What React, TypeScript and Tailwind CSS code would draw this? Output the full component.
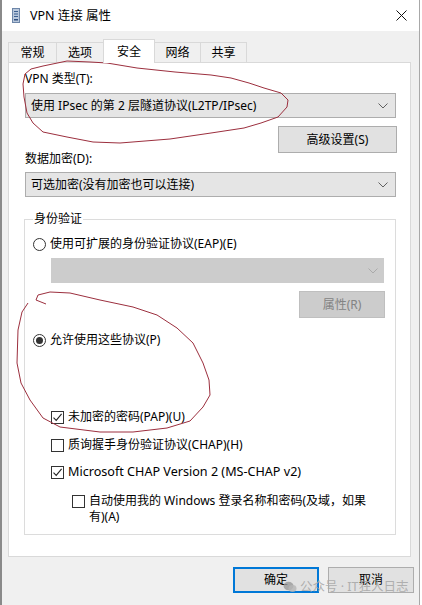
import React from "react";

const Chevron = ({ color = "#606060" }: { color?: string }) => (
  <svg width="10" height="6" viewBox="0 0 10 6">
    <path d="M0.5 0.5 L5 5 L9.5 0.5" fill="none" stroke={color} strokeWidth="1" />
  </svg>
);

const Check = ({ checked }: { checked?: boolean }) => (
  <span className="w-[13px] h-[13px] border border-[#333333] bg-white flex items-center justify-center shrink-0">
    {checked && (
      <svg width="11" height="11" viewBox="0 0 11 11">
        <path d="M1.5 5.6 L4.2 8.4 L9.6 1.9" fill="none" stroke="#222222" strokeWidth="1.1" />
      </svg>
    )}
  </span>
);

const Radio = ({ checked }: { checked?: boolean }) => (
  <span className="w-[13px] h-[13px] rounded-full border border-[#333333] bg-white flex items-center justify-center shrink-0">
    {checked && <span className="w-[7px] h-[7px] rounded-full bg-[#333333]" />}
  </span>
);

export default function App() {
  const p1 =
    "M24 97 L23 84 L25 74 L31 69 L43 66 L67 61 L90 62 L107 63 L137 68 L175 72 L211 75 L231 78 L249 83 L264 88 L281 93 L288 100 L287 107 L278 117 L261 123 L244 128 L211 133 L170 139 L120 143 L93 142 L67 137 L43 132 L33 123 L27 113 L24 97";
  const p2 =
    "M46 304 L36 300 L38 295 L50 292 L70 293 L100 300 L133 307 L157 315 L177 328 L193 343 L203 363 L209 380 L210 395 L203 407 L190 421 L167 428 L133 432 L100 432 L60 427 L43 418 L30 400 L21 383 L17 363 L18 330 L22 312 L28 303";
  return (
    <div className="relative w-[422px] h-[605px] bg-white overflow-hidden font-['Noto_Sans','Noto_Sans_CJK_SC',sans-serif] text-[12px] text-black">
      <div className="w-[420px] h-[605px] border-l-2 border-r border-l-[#8a8a8a] border-r-[#a8a8a8] bg-[#f0f0f0] flex flex-col">
        {/* title bar */}
        <div className="h-[31px] bg-white flex items-center shrink-0">
          <div className="ml-[10px] w-[8px] h-[15px] flex items-center justify-center">
            <svg width="8" height="15" viewBox="0 0 8 15">
              <rect x="0.5" y="0.5" width="7" height="14" fill="#b9c8dc" stroke="#6d86a8" />
              <rect x="2" y="3" width="4" height="1" fill="#3b5f8f" />
              <rect x="2" y="5.5" width="4" height="1" fill="#3b5f8f" />
              <rect x="2" y="8" width="4" height="1" fill="#3b5f8f" />
              <rect x="2" y="11" width="4" height="1.5" fill="#2f4f7f" />
            </svg>
          </div>
          <span className="ml-[10px] text-[12.5px] leading-[16px]">VPN 连接 属性</span>
          <div className="ml-auto mr-[12px] w-[12px] h-[12px] flex items-center justify-center">
            <svg width="11" height="11" viewBox="0 0 11 11">
              <path d="M0.5 0.5 L10.5 10.5 M10.5 0.5 L0.5 10.5" stroke="#111111" strokeWidth="1" />
            </svg>
          </div>
        </div>

        {/* tabs */}
        <div className="mt-[8px] ml-[6px] h-[24px] -mb-[1px] flex items-end relative z-10">
          <div className="w-[49px] h-[20px] mb-[1px] border border-b-0 border-[#d9d9d9] flex items-center justify-center">常规</div>
          <div className="w-[47px] h-[20px] mb-[1px] border-t border-r border-[#d9d9d9] flex items-center justify-center">选项</div>
          <div className="w-[52px] h-[24px] bg-white border border-b-0 border-[#d9d9d9] -ml-[1px] flex items-center justify-center pt-[1px]">安全</div>
          <div className="w-[46px] h-[20px] mb-[1px] border-t border-r border-[#d9d9d9] flex items-center justify-center">网络</div>
          <div className="w-[46px] h-[20px] mb-[1px] border-t border-r border-[#d9d9d9] flex items-center justify-center">共享</div>
        </div>

        {/* panel */}
        <div className="ml-[6px] w-[403px] border border-[#d9d9d9] bg-white pt-[8px] pl-[16px] pr-[14px] pb-[21px] flex flex-col">
          <div className="h-[16px] leading-[16px]">VPN 类型(T):</div>
          <div className="mt-[6px] h-[25px] border border-[#adadad] bg-[#e5e5e5] flex items-center pl-[5px] pr-[7px]">
            <span className="flex-1">使用 IPsec 的第 2 层隧道协议(L2TP/IPsec)</span>
            <Chevron />
          </div>
          <div className="mt-[8px] self-end mr-[-1px] w-[119px] h-[27px] border border-[#adadad] bg-[#e1e1e1] flex items-center justify-center">
            高级设置(S)
          </div>
          <div className="-mt-[2px] h-[16px] leading-[16px]">数据加密(D):</div>
          <div className="mt-[5px] h-[25px] border border-[#adadad] bg-[#e5e5e5] flex items-center pl-[5px] pr-[7px]">
            <span className="flex-1">可选加密(没有加密也可以连接)</span>
            <Chevron />
          </div>

          <fieldset className="mt-[14px] -ml-[1px] border border-[#dcdcdc] pl-[8px] pr-[11px] pb-[9px] flex flex-col">
            <legend className="px-[1px] leading-[16px]">身份验证</legend>
            <div className="mt-[9px] h-[16px] flex items-center gap-[4px]">
              <Radio />
              <span>使用可扩展的身份验证协议(EAP)(E)</span>
            </div>
            <div className="mt-[6px] ml-[18px] h-[25px] border border-[#cccccc] bg-[#cccccc] flex items-center justify-end pr-[5px]">
              <Chevron color="#aaaaaa" />
            </div>
            <div className="mt-[8px] self-end mr-[-1px] w-[86px] h-[27px] border border-[#bfbfbf] bg-[#cccccc] text-[#838383] flex items-center justify-center">
              属性(R)
            </div>
            <div className="mt-[14px] h-[16px] flex items-center gap-[4px]">
              <Radio checked />
              <span>允许使用这些协议(P)</span>
            </div>
            <div className="mt-[61px] ml-[18px] h-[16px] flex items-center gap-[4px]">
              <Check checked />
              <span>未加密的密码(PAP)(U)</span>
            </div>
            <div className="mt-[12px] ml-[18px] h-[16px] flex items-center gap-[4px]">
              <Check />
              <span>质询握手身份验证协议(CHAP)(H)</span>
            </div>
            <div className="mt-[11px] ml-[18px] h-[16px] flex items-center gap-[4px]">
              <Check checked />
              <span className="text-[12.6px]">Microsoft CHAP Version 2 (MS-CHAP v2)</span>
            </div>
            <div className="mt-[13px] ml-[39px] flex items-start gap-[4px]">
              <span className="mt-[2px]">
                <Check />
              </span>
              <span className="leading-[16px]">
                自动使用我的 Windows 登录名称和密码(及域，如果
                <br />
                有)(A)
              </span>
            </div>
          </fieldset>
        </div>

        {/* buttons */}
        <div className="mt-[10px] flex justify-end gap-[9px] pr-[5px]">
          <div className="w-[86px] h-[26px] border-2 border-[#0078d7] bg-[#e1e1e1] flex items-center justify-center">确定</div>
          <div className="w-[86px] h-[26px] border border-[#adadad] bg-[#e1e1e1] flex items-center justify-center">取消</div>
        </div>
      </div>

      {/* watermark */}
      <div className="absolute left-[283px] top-[578px] flex items-center gap-[3px] text-[12.5px] leading-[18px] text-[#a8a8a8]/90 pointer-events-none">
        <svg width="14" height="12" viewBox="0 0 14 12">
          <ellipse cx="5.5" cy="5" rx="5" ry="4.2" fill="#9a9a9a" opacity="0.8" />
          <ellipse cx="9.5" cy="7.5" rx="4" ry="3.4" fill="#b5b5b5" opacity="0.8" />
        </svg>
        <span>公众号 · IT狂人日志</span>
      </div>

      {/* red annotations */}
      <svg className="absolute left-0 top-0 pointer-events-none" width="422" height="605" viewBox="0 0 422 605">
        <path d={p1} fill="none" stroke="#9c2f3e" strokeWidth="1" strokeLinejoin="round" />
        <path d={p2} fill="none" stroke="#9c2f3e" strokeWidth="1" strokeLinejoin="round" />
      </svg>
    </div>
  );
}
